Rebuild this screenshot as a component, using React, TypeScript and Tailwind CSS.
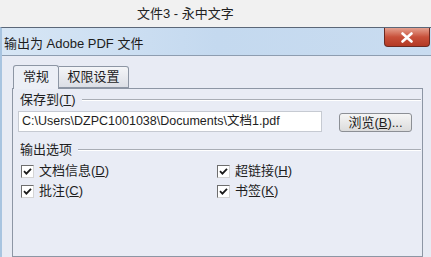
import React from "react";

const cjk = "font-['Liberation_Sans','Noto_Sans_CJK_SC',sans-serif]";

function Check({ label, hotkey }: { label: string; hotkey: string }) {
  return (
    <label className="flex items-center h-[20px] gap-[5px]">
      <span className="w-[13px] h-[13px] bg-white border border-t-[#6e6e6e] border-l-[#6e6e6e] border-r-[#d4d4d4] border-b-[#d4d4d4] flex items-center justify-center">
        <svg width="9" height="9" viewBox="0 0 9 9" aria-hidden="true">
          <path d="M1 4.2 L3.4 6.6 L8 1.8" fill="none" stroke="#1a1a1a" strokeWidth="1.8" />
        </svg>
      </span>
      <span className="text-[13px] text-[#1e1e1e]">
        {label}(<span className="underline">{hotkey}</span>)
      </span>
    </label>
  );
}

function GroupLabel({ children }: { children: React.ReactNode }) {
  return (
    <div className="flex items-center h-[16px] gap-[6px]">
      <span className="text-[13px] text-[#1e1e1e] whitespace-nowrap">{children}</span>
      <div className="flex-1 border-t border-[#a9adb5] border-b border-b-white" />
    </div>
  );
}

export default function App() {
  return (
    <div className={`w-[431px] h-[257px] overflow-hidden bg-[#f1f1f1] flex flex-col ${cjk}`}>
      <div className="h-[27px] shrink-0 flex items-center pl-[137px] text-[13px] text-[#222]">
        文件3 - 永中文字
      </div>
      <div className="flex-1 flex flex-col border-t border-[#5b6778] border-l-2 border-l-[#a8c4e0]">
        <div className="h-[28px] shrink-0 flex justify-between border-b border-[#8e9db0] bg-gradient-to-r from-[#d7e6f5] via-[#c4d9ef] to-[#c9dcf0]">
          <span className="pl-[2px] pt-[6px] text-[13px] text-[#1c1c1c]">输出为 Adobe PDF 文件</span>
          <button className="mr-[1px] w-[46px] h-[19px] rounded-b-[4px] border border-t-0 border-[#6b2a22] bg-gradient-to-b from-[#e4a08f] via-[#c8503a] to-[#b33a25] flex items-center justify-center">
            <svg width="14" height="11" viewBox="0 0 14 11" aria-hidden="true">
              <path d="M2.5 1.5 L11.5 9.5 M11.5 1.5 L2.5 9.5" stroke="#fff" strokeWidth="2.6" strokeLinecap="round" />
            </svg>
          </button>
        </div>
        <div className="flex-1 bg-[#e8ebf4] pl-[10px] pr-[8px] pt-[8px] flex flex-col">
          <div className="flex items-end h-[24px] pl-[1px] relative z-10">
            <div className="h-[24px] w-[46px] border border-b-0 border-[#8d96a4] rounded-t-[3px] bg-[#eceff6] flex items-center justify-center text-[13px] text-[#1e1e1e] -mb-px pb-[2px]">
              常规
            </div>
            <div className="h-[22px] w-[70px] border border-l-0 border-[#8d96a4] rounded-tr-[3px] bg-gradient-to-b from-[#f4f5f8] to-[#dcdfe6] flex items-center justify-center text-[13px] text-[#1e1e1e]">
              权限设置
            </div>
          </div>
          <div className="flex-1 border border-[#8d96a4] bg-[#e9ecf5] pl-[7px] pr-[1px] pt-[3px]">
            <GroupLabel>
              保存到(<span className="underline">T</span>)
            </GroupLabel>
            <div className="flex items-start mt-[3px] pr-[9px]">
              <div className="ml-[-2px] w-[304px] h-[21px] bg-white border border-[#c6cad2] flex items-center pl-[3px] text-[12.5px] text-[#1e1e1e] whitespace-nowrap overflow-hidden">
                C:\Users\DZPC1001038\Documents\文档1.pdf
              </div>
              <button className="ml-auto mt-[2px] w-[73px] h-[19px] rounded-[3px] border border-[#8c8f95] bg-gradient-to-b from-[#f5f5f5] to-[#dcdcdc] text-[13px] text-[#1e1e1e] flex items-center justify-center leading-none">
                浏览(<span className="underline">B</span>)...
              </button>
            </div>
            <div className="mt-[10px]">
              <GroupLabel>输出选项</GroupLabel>
            </div>
            <div className="grid grid-cols-[196px_1fr] mt-[3px] pl-[1px]">
              <Check label="文档信息" hotkey="D" />
              <Check label="超链接" hotkey="H" />
              <Check label="批注" hotkey="C" />
              <Check label="书签" hotkey="K" />
            </div>
          </div>
        </div>
      </div>
    </div>
  );
}
